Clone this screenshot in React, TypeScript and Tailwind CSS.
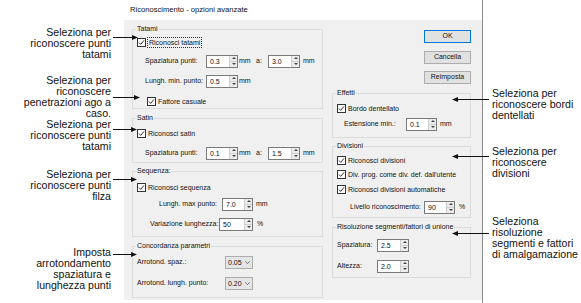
import type { ReactNode } from "react";

const Check = () => (
  <svg width="9" height="9" viewBox="0 0 9 9" className="shrink-0">
    <rect x="0.5" y="0.5" width="8" height="8" fill="#fff" stroke="#333" />
    <polyline points="2,4.6 3.7,6.4 7,2.4" fill="none" stroke="#333" strokeWidth="1" />
  </svg>
);

const CheckRow = ({ label, className, focus }: { label: string; className: string; focus?: boolean }) => (
  <div className={`flex h-[12px] items-center ${className}`}>
    <Check />
    {focus ? (
      <span className="ml-[1px] border border-dotted border-[#333] px-[1px] leading-[9px]">{label}</span>
    ) : (
      <span className="ml-[2px] leading-[9px]">{label}</span>
    )}
  </div>
);

const Spin = ({ value, w }: { value: string; w: string }) => (
  <div className={`flex h-[13px] shrink-0 border border-[#7a7a7a] bg-white ${w}`}>
    <span className="flex-1 pl-[3px] leading-[11px]">{value}</span>
    <div className="flex w-[8px] flex-col border-l border-[#cfcfcf] bg-[#ececec]">
      <div className="flex flex-1 items-center justify-center border-b border-[#cfcfcf]">
        <svg width="4" height="2" viewBox="0 0 4 2">
          <polygon points="0,2 2,0 4,2" fill="#444" />
        </svg>
      </div>
      <div className="flex flex-1 items-center justify-center">
        <svg width="4" height="2" viewBox="0 0 4 2">
          <polygon points="0,0 2,2 4,0" fill="#444" />
        </svg>
      </div>
    </div>
  </div>
);

const Select = ({ value }: { value: string }) => (
  <div className="flex h-[13px] w-[28px] shrink-0 items-center justify-between border border-[#adadad] bg-[#e5e5e5] px-[2px]">
    <span className="leading-[9px]">{value}</span>
    <svg width="5" height="3" viewBox="0 0 5 3">
      <polyline points="0.3,0.3 2.5,2.6 4.7,0.3" fill="none" stroke="#555" strokeWidth="0.8" />
    </svg>
  </div>
);

const Group = ({ title, className, children }: { title: string; className: string; children: ReactNode }) => (
  <div className={`border border-[#dcdcdc] ${className}`}>
    <div className="-mt-[6px] ml-[3px] w-fit bg-[#f0f0f0] px-[1px] leading-[10px]">{title}</div>
    {children}
  </div>
);

const Button = ({ label, primary, className }: { label: string; primary?: boolean; className: string }) => (
  <div
    className={`ml-auto flex h-[13px] w-[47px] items-center justify-center border bg-[#e1e1e1] ${
      primary ? "border-[#0078d7]" : "border-[#adadad]"
    } ${className}`}
  >
    {label}
  </div>
);

const Dialog = () => (
  <div className="flex w-[359px] shrink-0 flex-col whitespace-nowrap border-r border-[#8c8c8c] text-[7px] text-[#111]">
    <div className="flex h-[20px] items-center pl-[6px] text-[7.6px]">Riconoscimento - opzioni avanzate</div>

    <div className="flex h-[280px] gap-[9px] bg-[#f0f0f0] pl-[8px] pt-[9px]">
      <div className="flex w-[191px] flex-col">
        <Group title="Tatami" className="h-[80px]">
          <CheckRow label="Riconosci tatami" focus className="mt-[2px] pl-[4px]" />
          <div className="mt-[6px] flex h-[14px] items-center pl-[12px]">
            <span className="w-[61px]">Spaziatura punti:</span>
            <Spin value="0.3" w="w-[32px]" />
            <span className="w-[18px] pl-[1px]">mm</span>
            <span className="w-[12px]">a:</span>
            <Spin value="3.0" w="w-[32px]" />
            <span className="pl-[3px]">mm</span>
          </div>
          <div className="mt-[6px] flex h-[14px] items-center pl-[12px]">
            <span className="w-[61px]">Lungh. min. punto:</span>
            <Spin value="0.5" w="w-[32px]" />
            <span className="pl-[1px]">mm</span>
          </div>
          <CheckRow label="Fattore casuale" className="mt-[7px] pl-[14px]" />
        </Group>

        <Group title="Satin" className="mt-[9px] h-[45px]">
          <CheckRow label="Riconosci satin" className="mt-[4px] pl-[4px]" />
          <div className="mt-[7px] flex h-[14px] items-center pl-[12px]">
            <span className="w-[61px]">Spaziatura punti:</span>
            <Spin value="0.1" w="w-[32px]" />
            <span className="w-[18px] pl-[1px]">mm</span>
            <span className="w-[12px]">a:</span>
            <Spin value="1.5" w="w-[32px]" />
            <span className="pl-[3px]">mm</span>
          </div>
        </Group>

        <Group title="Sequenza:" className="mt-[8px] h-[66px]">
          <CheckRow label="Riconosci sequenza" className="mt-[5px] pl-[4px]" />
          <div className="mt-[4px] flex h-[14px] items-center pl-[26px]">
            <span className="w-[63px]">Lungh. max punto:</span>
            <Spin value="7.0" w="w-[31px]" />
            <span className="pl-[3px]">mm</span>
          </div>
          <div className="mt-[6px] flex h-[14px] items-center pl-[17px]">
            <span className="w-[69px]">Variazione lunghezza:</span>
            <Spin value="50" w="w-[34px]" />
            <span className="pl-[4px]">%</span>
          </div>
        </Group>

        <Group title="Concordanza parametri" className="mt-[9px] h-[52px]">
          <div className="mt-[4px] flex h-[14px] items-center pl-[4px]">
            <span className="w-[88px]">Arrotond. spaz.:</span>
            <Select value="0.05" />
          </div>
          <div className="mt-[7px] flex h-[14px] items-center pl-[4px]">
            <span className="w-[88px]">Arrotond. lungh. punto:</span>
            <Select value="0.20" />
          </div>
        </Group>
      </div>

      <div className="flex w-[139px] flex-col">
        <Button label="OK" primary className="mt-[1px]" />
        <Button label="Cancella" className="mt-[8px]" />
        <Button label="Reimposta" className="mt-[7px]" />

        <Group title="Effetti" className="mt-[9px] h-[45px]">
          <CheckRow label="Bordo dentellato" className="mt-[4px] pl-[4px]" />
          <div className="mt-[3px] flex h-[14px] items-center pl-[11px]">
            <span className="w-[62px]">Estensione min.:</span>
            <Spin value="0.1" w="w-[31px]" />
            <span className="pl-[3px]">mm</span>
          </div>
        </Group>

        <Group title="Divisioni" className="mt-[8px] h-[72px]">
          <CheckRow label="Riconosci divisioni" className="mt-[3px] pl-[4px]" />
          <CheckRow label="Div. prog. come div. def. dall'utente" className="mt-[2px] pl-[4px]" />
          <CheckRow label="Riconosci divisioni automatiche" className="mt-[3px] pl-[4px]" />
          <div className="mt-[5px] flex h-[14px] items-center pl-[17px]">
            <span className="w-[74px]">Livello riconoscimento:</span>
            <Spin value="90" w="w-[31px]" />
            <span className="pl-[4px]">%</span>
          </div>
        </Group>

        <Group title="Risoluzione segmenti/fattori di unione" className="mt-[9px] h-[51px]">
          <div className="mt-[6px] flex h-[14px] items-center pl-[4px]">
            <span className="w-[40px]">Spaziatura:</span>
            <Spin value="2.5" w="w-[32px]" />
          </div>
          <div className="mt-[7px] flex h-[14px] items-center pl-[4px]">
            <span className="w-[40px]">Altezza:</span>
            <Spin value="2.0" w="w-[32px]" />
          </div>
        </Group>
      </div>
    </div>
  </div>
);

const leftArrows = [
  { y: 37, tip: 138 },
  { y: 97, tip: 140 },
  { y: 129, tip: 137 },
  { y: 179, tip: 137 },
  { y: 254, tip: 137 },
];
const rightArrows = [99, 156, 233];

const Arrows = () => (
  <svg className="pointer-events-none absolute left-0 top-0" width="581" height="303" viewBox="0 0 581 303">
    {leftArrows.map(({ y, tip }) => (
      <g key={y}>
        <line x1="113" x2={tip - 5} y1={y + 0.5} y2={y + 0.5} stroke="#111" strokeWidth="1" />
        <polygon points={`${tip},${y + 0.5} ${tip - 6},${y - 2} ${tip - 6},${y + 3}`} fill="#111" />
      </g>
    ))}
    {rightArrows.map((y) => (
      <g key={y}>
        <line x1="458" x2="489" y1={y + 0.5} y2={y + 0.5} stroke="#111" strokeWidth="1" />
        <polygon points={`452,${y + 0.5} 458,${y - 2} 458,${y + 3}`} fill="#111" />
      </g>
    ))}
  </svg>
);

export default function App() {
  return (
    <div className="relative flex h-[303px] w-[581px] overflow-hidden bg-white font-['Liberation_Sans',Arial,sans-serif] text-black">
      <div className="w-[124px] shrink-0 whitespace-nowrap pr-[13px] text-right text-[10.6px] leading-[11px] text-[#111]">
        <p className="mt-[27px]">Seleziona per<br />riconoscere punti<br />tatami</p>
        <p className="mt-[15px]">Seleziona per<br />riconoscere<br />penetrazioni ago a<br />caso.</p>
        <p className="mt-0">Seleziona per<br />riconoscere punti<br />tatami</p>
        <p className="mt-[17px]">Seleziona per<br />riconoscere punti<br />filza</p>
        <p className="mt-[45px]">Imposta<br />arrotondamento<br />spaziatura e<br />lunghezza punti</p>
      </div>

      <Dialog />

      <div className="flex-1 whitespace-nowrap pl-[9px] text-[10.6px] leading-[11px] text-[#111]">
        <p className="mt-[88px]">Seleziona per<br />riconoscere bordi<br />dentellati</p>
        <p className="mt-[25px]">Seleziona per<br />riconoscere<br />divisioni</p>
        <p className="mt-[37px]">Seleziona<br />risoluzione<br />segmenti e fattori<br />di amalgamazione</p>
      </div>

      <Arrows />
    </div>
  );
}
